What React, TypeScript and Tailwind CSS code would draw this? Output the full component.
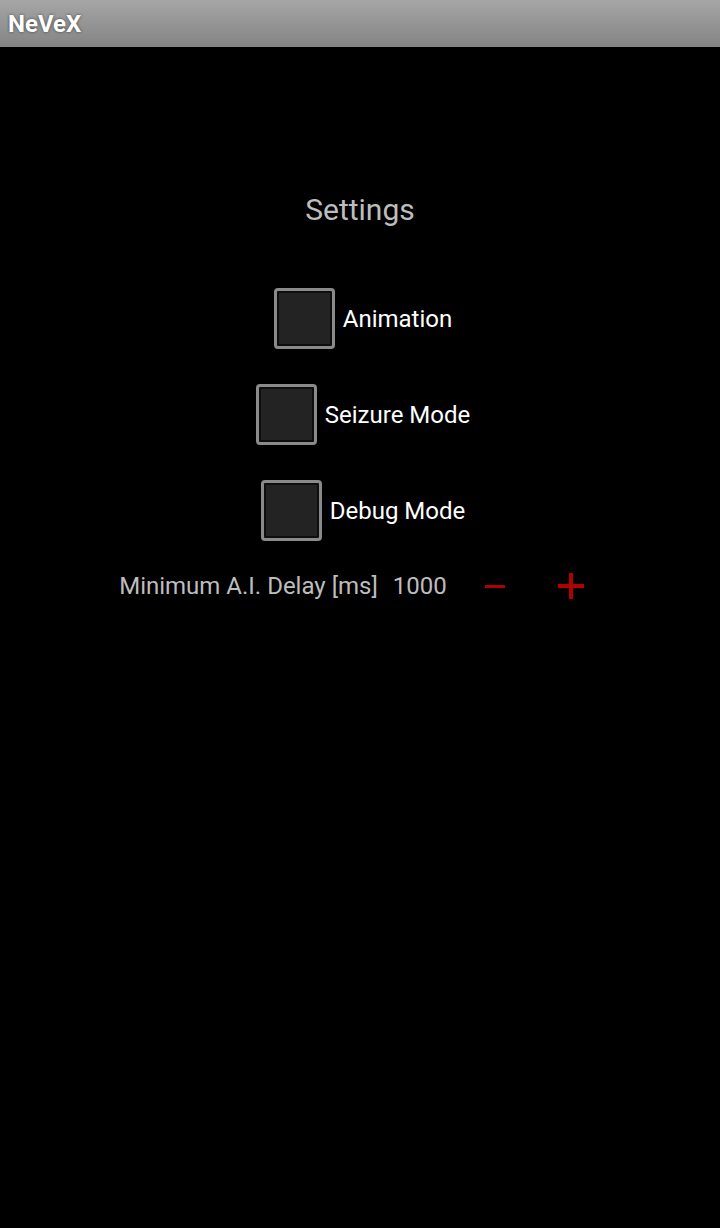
import React, { useState } from 'react';

const font = { fontFamily: 'Roboto, "Noto Sans", sans-serif' };

function Box({ onToggle }: { onToggle: () => void }) {
  return (
    <button
      onClick={onToggle}
      className="w-[61px] h-[61px] rounded-[4px] border-[3px] border-[#8a8a8a] bg-[#0e0e0e] p-[2px] shrink-0"
    >
      <div className="w-full h-full bg-[#232323]" />
    </button>
  );
}

function CheckRow({ label }: { label: string }) {
  const [on, setOn] = useState(false);
  return (
    <div className="flex items-center justify-center gap-[8px] pl-[6px] h-[61px]">
      <Box onToggle={() => setOn(!on)} />
      <span className="text-[24px] text-white leading-none">{label}</span>
    </div>
  );
}

export default function App() {
  const [delay, setDelay] = useState(1000);

  return (
    <div className="w-[720px] h-[1228px] bg-black flex flex-col" style={font}>
      <div className="h-[47px] bg-gradient-to-b from-[#a6a6a6] to-[#848484] flex items-center px-[8px]">
        <span className="text-[24px] font-bold text-white [text-shadow:0_0_3px_rgba(0,0,0,0.6)]">NeVeX</span>
      </div>

      <div className="flex flex-col items-center pt-[143px]">
        <h1 className="text-[30px] text-[#bdbdbd] leading-none h-[40px] flex items-center">Settings</h1>

        <div className="flex flex-col gap-[35px] mt-[58px]">
          <CheckRow label="Animation" />
          <CheckRow label="Seizure Mode" />
          <CheckRow label="Debug Mode" />
        </div>

        <div className="flex items-center mt-[30px] h-[30px] pr-[17px] text-[24px] text-[#bdbdbd]">
          <span>Minimum A.I. Delay [ms]</span>
          <span className="ml-[15px] w-[54px]">{delay}</span>
          <button onClick={() => setDelay(Math.max(0, delay - 100))} className="ml-[38px] w-[20px] h-[20px] flex items-center">
            <div className="w-[20px] h-[3px] bg-[#b00000]" />
          </button>
          <button onClick={() => setDelay(delay + 100)} className="ml-[53px] w-[26px] h-[26px] relative">
            <div className="absolute left-0 top-[11px] w-[26px] h-[4px] bg-[#b00000]" />
            <div className="absolute left-[11px] top-0 w-[4px] h-[26px] bg-[#b00000]" />
          </button>
        </div>
      </div>
    </div>
  );
}
